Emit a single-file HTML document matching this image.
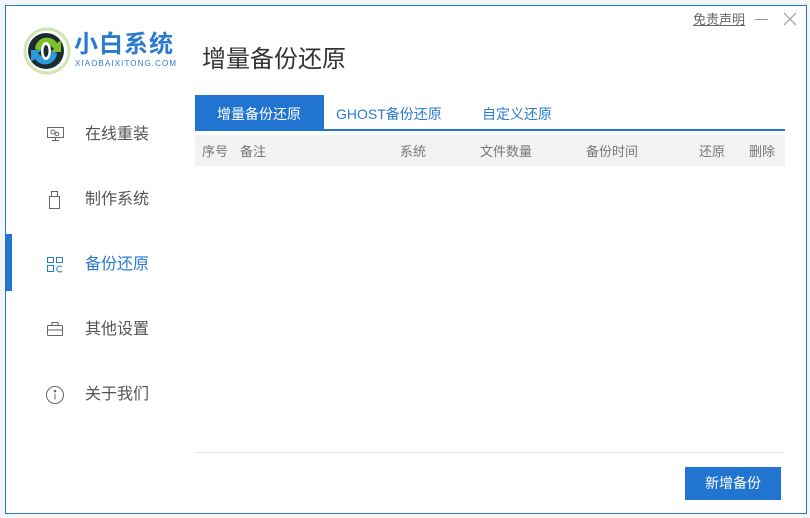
<!DOCTYPE html>
<html><head><meta charset="utf-8"><style>
*{margin:0;padding:0;box-sizing:border-box}
body{width:810px;height:518px;background:#f4f5f7;position:relative;overflow:hidden;font-family:"Liberation Sans","Noto Sans CJK SC",sans-serif}
.win{position:absolute;left:5px;top:5px;width:802px;height:509px;background:#fff;border:1px solid #2a77cf}
.a{position:absolute;white-space:nowrap;line-height:1.2}
.nav{font-size:16px;color:#555}
.th{font-size:13px;color:#777;top:144px}
</style></head><body>
<div class="win"></div>
<svg class="a" style="left:23px;top:27px" width="48" height="48" viewBox="0 0 48 48">
<circle cx="24" cy="24" r="22" fill="none" stroke="#cfe6b0" stroke-width="3"/>
<circle cx="23" cy="24" r="18" fill="#1d2b30"/>
<path d="M12 22a12 12 0 0 1 22-6l4-3v12h-11l4-3a8 8 0 0 0-14 2z" fill="#7bbf2a"/>
<path d="M34 26a12 12 0 0 1-22 6l-4 3V23h11l-4 3a8 8 0 0 0 14-2z" fill="#2a9ad8"/>
<ellipse cx="23" cy="24" rx="5" ry="9" fill="#fff"/><ellipse cx="23" cy="24" rx="2.5" ry="6" fill="#1d2b30"/>
</svg>
<div class="a" style="left:74px;top:31px;font-size:24px;font-weight:bold;color:#2a7bd0;letter-spacing:1px">小白系统</div>
<div class="a" style="left:75px;top:59px;font-size:8px;color:#2a7bd0;letter-spacing:1.1px">XIAOBAIXITONG.COM</div>
<div class="a" style="left:693px;top:12px;font-size:13px;color:#666;text-decoration:underline">免责声明</div>
<div class="a" style="left:755px;top:19px;width:13px;height:1px;background:#999"></div>
<svg class="a" style="left:783px;top:12px" width="14" height="14" viewBox="0 0 14 14" stroke="#aaa" stroke-width="1.3"><path d="M1 1l12 12M13 1L1 13"/></svg>
<div class="a" style="left:202px;top:46px;font-size:24px;color:#333">增量备份还原</div>

<svg class="a" style="left:46px;top:126px" width="20" height="16" viewBox="0 0 20 16" fill="none" stroke="#666"><rect x="1.5" y="1.5" width="16" height="10"/><circle cx="7" cy="6" r="2"/><circle cx="11" cy="8" r="1.8"/><path d="M9.5 11.5v3M6 14.5h7"/></svg>
<div class="a nav" style="left:85px;top:125px">在线重装</div>
<svg class="a" style="left:48px;top:190px" width="14" height="20" viewBox="0 0 14 20" fill="none" stroke="#666"><rect x="3.5" y="1.5" width="6" height="5"/><rect x="1.5" y="6.5" width="10" height="12"/></svg>
<div class="a nav" style="left:85px;top:190px">制作系统</div>
<div class="a" style="left:5px;top:234px;width:7px;height:57px;background:#2174d0"></div>
<svg class="a" style="left:46px;top:256px" width="18" height="18" viewBox="0 0 18 18" fill="none" stroke="#2a7bd0"><rect x="1.5" y="1.5" width="6" height="5"/><rect x="10.5" y="1.5" width="6" height="5"/><rect x="1.5" y="9.5" width="6" height="6"/><path d="M16 11a3 3 0 1 0 0 4"/></svg>
<div class="a nav" style="left:85px;top:255px;color:#2a7bd0">备份还原</div>
<svg class="a" style="left:46px;top:321px" width="18" height="16" viewBox="0 0 18 16" fill="none" stroke="#666"><rect x="1.5" y="4.5" width="15" height="10" rx="1"/><path d="M6 4.5v-3h6v3M1.5 9h15"/></svg>
<div class="a nav" style="left:85px;top:320px">其他设置</div>
<svg class="a" style="left:45px;top:385px" width="20" height="20" viewBox="0 0 20 20" fill="none" stroke="#666"><circle cx="10" cy="10" r="8.5"/><path d="M10 8.5v6"/><circle cx="10" cy="6" r=".8" fill="#666"/></svg>
<div class="a nav" style="left:85px;top:385px">关于我们</div>

<div class="a" style="left:195px;top:95px;width:129px;height:35px;background:#2174d0"></div>
<div class="a" style="left:195px;top:129px;width:590px;height:2px;background:#2174d0"></div>
<div class="a" style="left:217px;top:106px;font-size:14px;color:#fff">增量备份还原</div>
<div class="a" style="left:336px;top:106px;font-size:14px;color:#2a7bd0">GHOST备份还原</div>
<div class="a" style="left:482px;top:106px;font-size:14px;color:#2a7bd0">自定义还原</div>
<div class="a" style="left:195px;top:135px;width:590px;height:31px;background:#f2f2f2"></div>
<div class="a th" style="left:202px">序号</div>
<div class="a th" style="left:240px">备注</div>
<div class="a th" style="left:400px">系统</div>
<div class="a th" style="left:480px">文件数量</div>
<div class="a th" style="left:586px">备份时间</div>
<div class="a th" style="left:699px">还原</div>
<div class="a th" style="left:749px">删除</div>
<div class="a" style="left:195px;top:452px;width:590px;height:1px;background:#e6e6e6"></div>
<div class="a" style="left:685px;top:467px;width:96px;height:33px;background:#2174d0;color:#fff;font-size:14px;text-align:center;line-height:33px">新增备份</div>
</body></html>
